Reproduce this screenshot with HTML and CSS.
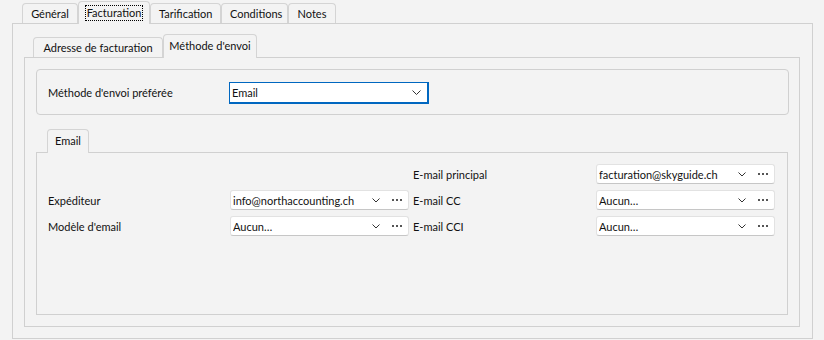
FILE: index.html
```html
<!DOCTYPE html>
<html>
<head>
    <meta charset="utf-8">
    <title>Facturation - Méthode d'envoi</title>
    <link rel="stylesheet" href="styles.css">
</head>
<body>
    <div class="window">
        <!-- main tabs -->
        <div class="tabs tabs-main">
            <div class="tab">Général</div>
            <div class="tab active"><span class="focus">Facturation</span></div>
            <div class="tab">Tarification</div>
            <div class="tab">Conditions</div>
            <div class="tab">Notes</div>
        </div>
        <div class="panel panel-main">
            <div class="tabs tabs-sub">
                <div class="tab">Adresse de facturation</div>
                <div class="tab active">Méthode d'envoi</div>
            </div>
            <div class="panel panel-sub">
                <div class="group">
                    <span class="group-label">Méthode d'envoi préférée</span>
                    <div class="select">
                        <span class="value">Email</span>
                        <svg class="chev" width="9" height="5" viewBox="0 0 9 5"><polyline points="0.5,0.5 4.5,4.5 8.5,0.5" fill="none" stroke="#333" stroke-width="1"/></svg>
                    </div>
                </div>

                <div class="tabs tabs-email">
                    <div class="tab active">Email</div>
                </div>
                <div class="panel panel-email">
                    <div class="form-grid">
                        <span></span>
                        <span></span>
                        <span class="label label-right">E-mail principal</span>
                        <div class="combo">
                            <span class="value">facturation@skyguide.ch</span>
                            <svg class="chev" width="8" height="5" viewBox="0 0 8 5"><polyline points="0.5,0.5 4,4 7.5,0.5" fill="none" stroke="#333" stroke-width="1"/></svg>
                            <svg class="dots" width="10" height="2" viewBox="0 0 10 2"><rect x="0" y="0" width="2" height="2" fill="#555"/><rect x="4" y="0" width="2" height="2" fill="#555"/><rect x="8" y="0" width="2" height="2" fill="#555"/></svg>
                        </div>

                        <span class="label">Expéditeur</span>
                        <div class="combo">
                            <span class="value">info@northaccounting.ch</span>
                            <svg class="chev" width="8" height="5" viewBox="0 0 8 5"><polyline points="0.5,0.5 4,4 7.5,0.5" fill="none" stroke="#333" stroke-width="1"/></svg>
                            <svg class="dots" width="10" height="2" viewBox="0 0 10 2"><rect x="0" y="0" width="2" height="2" fill="#555"/><rect x="4" y="0" width="2" height="2" fill="#555"/><rect x="8" y="0" width="2" height="2" fill="#555"/></svg>
                        </div>
                        <span class="label label-right">E-mail CC</span>
                        <div class="combo">
                            <span class="value">Aucun…</span>
                            <svg class="chev" width="8" height="5" viewBox="0 0 8 5"><polyline points="0.5,0.5 4,4 7.5,0.5" fill="none" stroke="#333" stroke-width="1"/></svg>
                            <svg class="dots" width="10" height="2" viewBox="0 0 10 2"><rect x="0" y="0" width="2" height="2" fill="#555"/><rect x="4" y="0" width="2" height="2" fill="#555"/><rect x="8" y="0" width="2" height="2" fill="#555"/></svg>
                        </div>

                        <span class="label">Modèle d'email</span>
                        <div class="combo">
                            <span class="value">Aucun…</span>
                            <svg class="chev" width="8" height="5" viewBox="0 0 8 5"><polyline points="0.5,0.5 4,4 7.5,0.5" fill="none" stroke="#333" stroke-width="1"/></svg>
                            <svg class="dots" width="10" height="2" viewBox="0 0 10 2"><rect x="0" y="0" width="2" height="2" fill="#555"/><rect x="4" y="0" width="2" height="2" fill="#555"/><rect x="8" y="0" width="2" height="2" fill="#555"/></svg>
                        </div>
                        <span class="label label-right">E-mail CCI</span>
                        <div class="combo">
                            <span class="value">Aucun…</span>
                            <svg class="chev" width="8" height="5" viewBox="0 0 8 5"><polyline points="0.5,0.5 4,4 7.5,0.5" fill="none" stroke="#333" stroke-width="1"/></svg>
                            <svg class="dots" width="10" height="2" viewBox="0 0 10 2"><rect x="0" y="0" width="2" height="2" fill="#555"/><rect x="4" y="0" width="2" height="2" fill="#555"/><rect x="8" y="0" width="2" height="2" fill="#555"/></svg>
                        </div>
                    </div>
                </div>
            </div>
        </div>
    </div>
</body>
</html>
```

FILE: styles.css
```css
body {
    margin: 0;
    padding: 0;
    background-color: #f3f3f3;
    font-family: "Segoe UI", Lato, sans-serif;
    font-size: 11px;
    color: #111;
}

.window {
    box-sizing: border-box;
    height: 340px;
    padding: 1px 11px 1px 12px;
    display: flex;
    flex-direction: column;
}

/* tabs */
.tabs {
    display: flex;
    align-items: flex-end;
}

.tab {
    box-sizing: border-box;
    height: 20px;
    padding: 0 8px;
    line-height: 19px;
    border: 1px solid #d4d4d4;
    border-bottom: none;
    border-radius: 4px 4px 0 0;
    background-color: #f3f3f3;
    white-space: nowrap;
    text-align: center;
}

.tab.active {
    position: relative;
    z-index: 1;
    height: 23px;
    margin-bottom: -1px;
    line-height: 21px;
}

.focus {
    display: inline-block;
    line-height: 14px;
    outline: 1px dotted #000;
    padding: 0 1px;
}

.tabs-main {
    margin-left: 10px;
}

.tabs-main .tab {
    width: 56px;
}

.tabs-main .tab.active {
    width: 72px;
    padding: 0 6px;
}

.tabs-main .tab:nth-child(3) {
    width: 71px;
}

.tabs-main .tab:nth-child(4) {
    width: 67px;
}

.tabs-main .tab:nth-child(5) {
    width: 48px;
}

.tabs-sub {
    margin-left: 9px;
}

.tabs-sub .tab {
    width: 130px;
}

.tabs-sub .tab.active {
    width: 94px;
    height: 24px;
    padding: 0 4px;
}

.tabs-email {
    margin-left: 11px;
    margin-top: 14px;
}

.tabs-email .tab.active {
    width: 42px;
    height: 24px;
    padding: 0 4px;
}

/* panels */
.panel {
    border: 1px solid #d0d0d0;
    display: flex;
    flex-direction: column;
    flex: 1;
}

.panel-main {
    padding: 10px 12px 11px 11px;
}

.panel-sub {
    padding: 11px 10px 11px 11px;
}

.panel-email {
    padding: 11px 11px 0 11px;
    margin-right: 1px;
}

/* preferred method group */
.group {
    box-sizing: border-box;
    height: 46px;
    padding: 0 0 0 11px;
    border: 1px solid #d0d0d0;
    border-radius: 4px;
    display: flex;
    align-items: center;
}

.group-label {
    flex: 0 0 181px;
}

.select {
    box-sizing: border-box;
    width: 200px;
    height: 22px;
    margin-top: 2px;
    background-color: #fff;
    border: 1px solid #0067c0;
    border-width: 1px 2px 2px 1px;
    display: flex;
    align-items: center;
    padding: 0 6px 0 2px;
}

.select .value {
    flex: 1;
}

/* email form */
.form-grid {
    display: grid;
    grid-template-columns: 182px 179px 187px 179px;
    grid-auto-rows: 20px;
    row-gap: 6px;
    align-items: center;
}

.label-right {
    padding-left: 4px;
}

.combo {
    box-sizing: border-box;
    height: 20px;
    background-color: #fff;
    border: 1px solid #e2e2e2;
    border-bottom-color: #c6c6c6;
    border-radius: 3px;
    display: flex;
    align-items: center;
    padding: 0 6px 0 2px;
}

.combo .value {
    flex: 1;
    white-space: nowrap;
    overflow: hidden;
}

.combo .chev {
    margin-right: 12px;
}
```
